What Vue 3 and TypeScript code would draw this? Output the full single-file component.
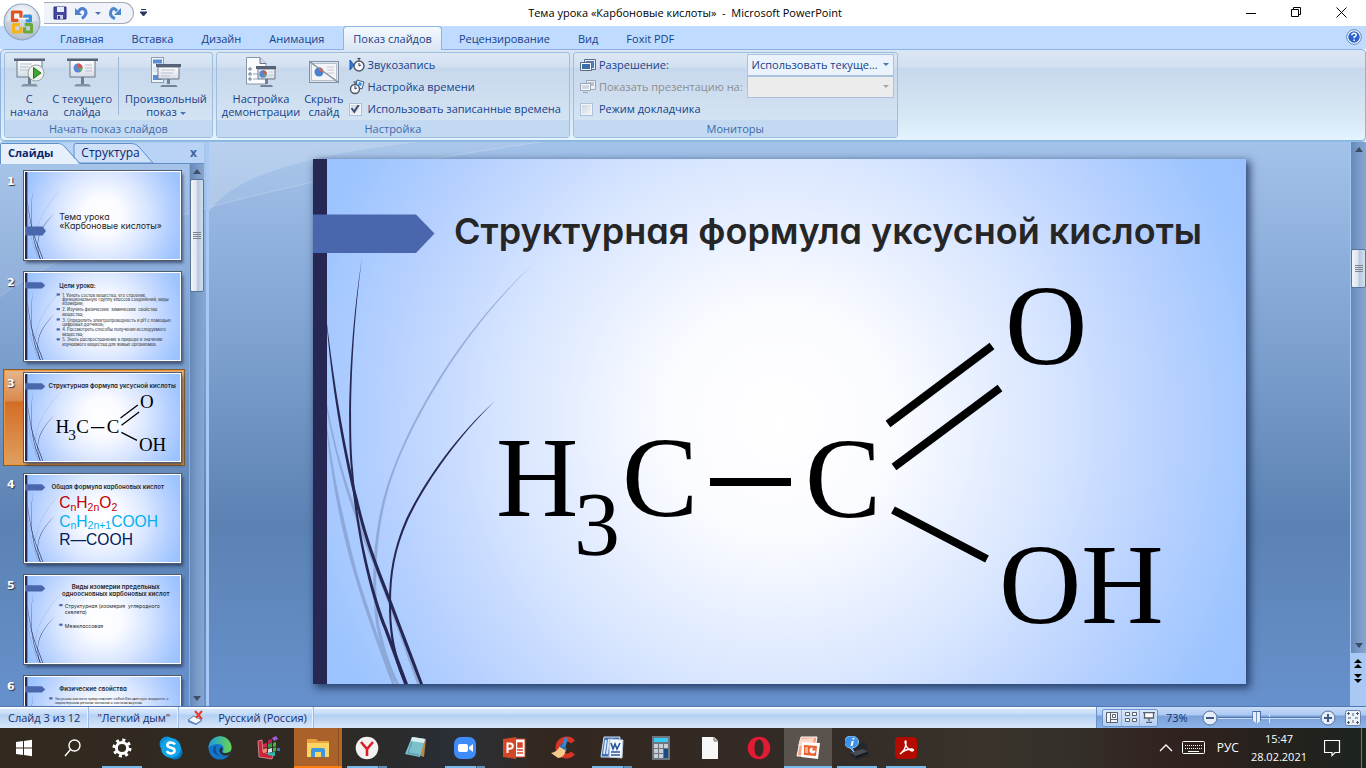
<script setup lang="ts">
import { ref } from 'vue'

interface Line {
  x: number
  y: number
  size: number
  text: string
  bold?: boolean
  middle?: boolean
  bullet?: boolean
}
interface Thumb {
  n: number
  flagY: number
  kind: 'text' | 'acid' | 'formula'
  lines: Line[]
}

const tabs = ['Главная', 'Вставка', 'Дизайн', 'Анимация', 'Показ слайдов', 'Рецензирование', 'Вид', 'Foxit PDF']
const activeTab = ref('Показ слайдов')
const current = ref(3)
const keepTimings = ref(true)
const presenter = ref(false)
const zoom = ref(37)

const thumbs: Thumb[] = [
  {
    n: 1,
    flagY: 330,
    kind: 'text',
    lines: [
      { x: 206, y: 286, size: 53, text: 'Тема урока' },
      { x: 206, y: 346, size: 53, text: '«Карбоновые кислоты»' },
    ],
  },
  {
    n: 2,
    flagY: 56,
    kind: 'text',
    lines: [
      { x: 206, y: 88, size: 36, text: 'Цели урока:', bold: true },
      { x: 224, y: 142, size: 25, text: '1. Узнать состав вещества, его строение,', bullet: true },
      { x: 224, y: 168, size: 25, text: 'функциональную группу классов соединений, виды' },
      { x: 224, y: 194, size: 25, text: 'изомерии;' },
      { x: 224, y: 230, size: 25, text: '2. Изучить физические  химические  свойства', bullet: true },
      { x: 224, y: 256, size: 25, text: 'вещества;' },
      { x: 224, y: 292, size: 25, text: '3. Определить электропроводность и pH с помощью', bullet: true },
      { x: 224, y: 318, size: 25, text: 'цифровых датчиков;' },
      { x: 224, y: 352, size: 25, text: '4. Рассмотреть способы получения исследуемого', bullet: true },
      { x: 224, y: 378, size: 25, text: 'вещества;' },
      { x: 224, y: 412, size: 25, text: '5. Знать распространение в природе и значение', bullet: true },
      { x: 224, y: 438, size: 25, text: 'изучаемого вещества для живых организмов.' },
    ],
  },
  { n: 3, flagY: 56, kind: 'acid', lines: [] },
  {
    n: 4,
    flagY: 56,
    kind: 'formula',
    lines: [{ x: 160, y: 86, size: 37, text: 'Общая формула карбоновых кислот', bold: true }],
  },
  {
    n: 5,
    flagY: 56,
    kind: 'text',
    lines: [
      { x: 546, y: 80, size: 37, text: 'Виды изомерии предельных', bold: true, middle: true },
      { x: 546, y: 122, size: 37, text: 'одноосновных карбоновых кислот', bold: true, middle: true },
      { x: 240, y: 194, size: 31, text: 'Структурная (изомерия  углеродного', bullet: true },
      { x: 240, y: 230, size: 31, text: 'скелета)' },
      { x: 240, y: 312, size: 31, text: 'Межклассовая', bullet: true },
    ],
  },
  {
    n: 6,
    flagY: 56,
    kind: 'text',
    lines: [
      { x: 206, y: 86, size: 37, text: 'Физические свойства', bold: true },
      { x: 180, y: 138, size: 22, text: 'Уксусная кислота представляет собой бесцветную жидкость с', bullet: true },
      { x: 180, y: 162, size: 22, text: 'характерным резким запахом и кислым вкусом.' },
    ],
  },
]

interface TaskItem {
  id: string
  label: string
  state?: 'run' | 'multi' | 'attention' | 'active'
}
const tasks: TaskItem[] = [
  { id: 'start', label: 'Пуск' },
  { id: 'search', label: 'Поиск' },
  { id: 'gear', label: 'Параметры', state: 'run' },
  { id: 'skype', label: 'Skype' },
  { id: 'edge', label: 'Edge' },
  { id: 'cubes', label: 'Кубики' },
  { id: 'folder', label: 'Проводник', state: 'attention' },
  { id: 'yandex', label: 'Яндекс', state: 'multi' },
  { id: 'note', label: 'Блокнот' },
  { id: 'zoom', label: 'Zoom', state: 'multi' },
  { id: 'ppt', label: 'PowerPoint' },
  { id: 'cc', label: 'CCleaner' },
  { id: 'word', label: 'Word', state: 'multi' },
  { id: 'calc', label: 'Калькулятор' },
  { id: 'file', label: 'Файл' },
  { id: 'opera', label: 'Opera' },
  { id: 'ppt7', label: 'PowerPoint 2007', state: 'active' },
  { id: 'printer', label: 'Принтер', state: 'run' },
  { id: 'pdf', label: 'Acrobat', state: 'run' },
]
</script>

<template>
  <div class="app">
    <svg class="defs" width="0" height="0" aria-hidden="true">
      <defs>
        <radialGradient id="paper" cx="466" cy="262" r="536" gradientUnits="userSpaceOnUse">
          <stop offset="0" stop-color="#ffffff" />
          <stop offset=".22" stop-color="#fafbff" />
          <stop offset=".5" stop-color="#d9e6ff" />
          <stop offset=".72" stop-color="#b9d2ff" />
          <stop offset=".92" stop-color="#9cc4ff" />
          <stop offset="1" stop-color="#9ac2ff" />
        </radialGradient>
        <linearGradient id="board" x1="0" y1="0" x2="0" y2="1">
          <stop offset="0" stop-color="#ffffff" />
          <stop offset="1" stop-color="#d5dce6" />
        </linearGradient>
        <linearGradient id="edgeg" x1="0" y1="0" x2="1" y2="0">
          <stop offset="0" stop-color="#1b9de2" />
          <stop offset="1" stop-color="#6ad64d" />
        </linearGradient>
        <symbol id="decor" viewBox="0 0 933 525">
          <rect width="933" height="525" fill="url(#paper)" />
          <g fill="#7f97c6" opacity=".65">
            <path d="M218 107 C140 180 97 265 80 310 C60 360 57 420 63 465 C69 495 76 512 83 525 L86 525 C79 511 72 492 66 465 C60 420 63 360 82 310 C99 265 142 182 218 107Z" />
            <path d="M14 253 C28 325 46 370 60 405 C74 440 92 490 104 525 L107 525 C94 486 79 443 63 403 C48 364 28 320 14 245Z" />
            <path d="M14 275 C20 330 29 375 42 418 C54 458 68 495 79 525 L82 525 C70 492 57 456 45 417 C33 372 22 325 14 268Z" />
          </g>
          <g fill="#262753">
            <path d="M49 99 C36 180 34 270 38 310 C42 370 56 432 71 470 L91 525 L95 525 L74 469 C59 431 44 370 40 310 C36 268 38 180 49 99Z" />
            <path d="M14 169 C20 240 32 300 42 342 C54 390 66 418 76 444 C86 470 98 502 107 525 L110 525 C101 500 89 470 79 443 C69 416 56 388 45 341 C34 298 23 240 14 165Z" />
            <path d="M182 242 C140 280 110 325 93 360 C80 390 76 415 76 445 C76 480 82 505 92 525 L94 525 C84 500 78 478 78 445 C78 415 82 390 95 361 C112 325 143 280 182 242Z" />
            <rect width="14" height="525" />
          </g>
        </symbol>
        <symbol id="acid" viewBox="0 0 933 525">
          <g font-family="'Liberation Serif', serif" font-size="114" fill="#000">
            <text x="183" y="357">H</text>
            <text x="261" y="396" font-size="92">3</text>
            <text x="309" y="357">C</text>
            <text x="492" y="358">C</text>
            <text x="692" y="205">O</text>
            <text x="686" y="464">OH</text>
          </g>
          <path d="M397 323H478M575 265L679 187M581 308L687 229M580 351L674 400" stroke="#000" stroke-width="8" fill="none" />
        </symbol>
        <symbol id="screen" viewBox="0 0 32 32">
          <path d="M15 20h3v7h-3z" fill="#6e7d92" />
          <path d="M10 27h13l2 2.500H8z" fill="#8593a5" />
          <rect x="4" y="3" width="25" height="17" fill="url(#board)" stroke="#6b7687" />
          <path d="M1 1.500h31v2.500H1z" fill="#566376" />
        </symbol>
      </defs>
    </svg>

    <header class="titlebar">
      <button class="orb" aria-label="Office">
        <svg viewBox="0 0 36 36" width="38" height="38">
          <defs>
            <radialGradient id="orbg" cx=".5" cy=".35" r=".65">
              <stop offset="0" stop-color="#fff" />
              <stop offset=".6" stop-color="#dce4ee" />
              <stop offset="1" stop-color="#a8b8cc" />
            </radialGradient>
          </defs>
          <circle cx="18" cy="18" r="17" fill="url(#orbg)" stroke="#8ea3bd" />
          <path d="M3 18a15 15 0 0 0 30 0q-15-5-30 0Z" fill="#b9c5d4" opacity=".6" />
          <g fill="none" stroke-width="3" stroke-linejoin="round">
            <path d="M14.500 16.500H9V8.500H17V14" stroke="#e2521b" />
            <path d="M20.500 14V12.500H26V17H21.500" stroke="#3e8fd8" />
            <path d="M16 20.500H10V27.500H17V22.500" stroke="#f6b217" />
            <path d="M20.500 20.500H27V27.500H20.500V23" stroke="#6aaa3c" />
          </g>
        </svg>
      </button>
      <div class="quick">
        <button aria-label="Сохранить">
          <svg width="14" height="14" viewBox="0 0 14 14">
            <path d="M1 1h12v12H1z" fill="#4548a4" stroke="#30317c" />
            <path d="M4 1h7v5H4z" fill="#e8edfa" /><path d="M4 9h6v4H4z" fill="#c9cfea" /><path d="M5 10h2v3H5z" fill="#30317c" />
          </svg>
        </button>
        <button aria-label="Отменить">
          <svg width="14" height="14" viewBox="0 0 14 14">
            <path d="M4 6Q8 0 11 4T8 12.500" fill="none" stroke="#4c7fd0" stroke-width="3" /><path d="M1 2v7h7z" fill="#4c7fd0" />
          </svg>
        </button>
        <i class="caret"></i>
        <button aria-label="Повторить">
          <svg width="14" height="14" viewBox="0 0 14 14">
            <path d="M9 5Q5 0 3 5T7 12.500" fill="none" stroke="#4c86cf" stroke-width="3" /><path d="M13 2v7H6z" fill="#4c86cf" />
          </svg>
        </button>
      </div>
      <svg class="more" width="7" height="8" viewBox="0 0 7 8"><path d="M1 .5h5M0 3h7L3.500 7z" fill="#25365c" stroke="#25365c" /></svg>
      <h1>Тема урока «Карбоновые кислоты»&nbsp; -&nbsp; Microsoft PowerPoint</h1>
      <div class="winbtns">
        <button aria-label="Свернуть"><svg width="11" height="11"><path d="M0 6.500h10" stroke="#000" /></svg></button>
        <button aria-label="Восстановить"><svg width="11" height="11"><path d="M.5 2.500h7v7h-7zM2.500 2.500v-2h7v7h-2" stroke="#000" fill="none" /></svg></button>
        <button aria-label="Закрыть"><svg width="11" height="11"><path d="M.5.500l10 10M10.500.500l-10 10" stroke="#000" /></svg></button>
      </div>
    </header>

    <nav class="tabs">
      <button v-for="t in tabs" :key="t" :class="{ on: t === activeTab }" @click="activeTab = t">{{ t }}</button>
      <svg class="help" width="16" height="16" viewBox="0 0 16 16">
        <circle cx="8" cy="8" r="6.500" fill="#2c62cf" stroke="#fff" stroke-width="1.500" />
        <circle cx="8" cy="8" r="7.300" fill="none" stroke="#5e86b8" />
        <path d="M5.800 6.300Q6 4.300 8.100 4.300T10.200 6.200Q10 7.200 8.200 8V9.300M8.200 10.500V12" stroke="#fff" stroke-width="1.500" fill="none" />
      </svg>
    </nav>

    <section class="ribbon">
      <div class="group">
        <div class="body starts">
          <button class="big">
            <svg width="32" height="32" viewBox="0 0 32 32">
              <use href="#screen" /><path d="M7 7h12M7 10h9M7 13h10" stroke="#b9c1cd" />
              <circle cx="23" cy="16" r="8" fill="#eef2ee" stroke="#98a5a4" /><path d="M20.500 10.500L28 16l-7.500 5.500z" fill="#3fa535" stroke="#1d7a1d" />
            </svg>
            <span>С<br />начала</span>
          </button>
          <button class="big">
            <svg width="32" height="32" viewBox="0 0 32 32">
              <use href="#screen" /><circle cx="12" cy="11" r="4.500" fill="#5b86d3" /><path d="M12 11V6.500a4.500 4.500 0 0 1 4.500 4.500z" fill="#d9534a" /><path d="M12 11h4.500a4.500 4.500 0 0 1-2 3.800z" fill="#5fae5a" /><path d="M19 8h7M19 11h7M19 14h7" stroke="#b9c1cd" />
            </svg>
            <span>С текущего<br />слайда</span>
          </button>
          <i class="rule"></i>
          <button class="big">
            <svg width="32" height="32" viewBox="0 0 32 32">
              <rect x="1.500" y=".5" width="12" height="25" fill="#eef3fa" stroke="#8b9db5" /><path d="M3 2.500h9v4H3zM3 18h9v5H3z" fill="#5b8fd4" /><path d="M3 10h9v5H3z" fill="#dde5f0" />
              <path d="M17 22h3v5h-3zM12 28h14l2 2H10z" fill="#75839a" /><path d="M8 10h21v12H8z" fill="url(#board)" stroke="#6b7687" /><path d="M6 7h25v3H6z" fill="#566376" /><path d="M11 13h14M11 16h12M11 19h9" stroke="#b9c1cd" />
            </svg>
            <span>Произвольный<br />показ <i class="caret"></i></span>
          </button>
        </div>
        <footer>Начать показ слайдов</footer>
      </div>

      <div class="group">
        <div class="body setup">
          <button class="big">
            <svg width="32" height="32" viewBox="0 0 32 32">
              <path d="M1.500 .5H15l6 6V27H1.500z" fill="#fbfcfe" stroke="#8795a8" /><path d="M15 .5v6h6" fill="#d5dce6" stroke="#657285" />
              <g fill="none" stroke="#63718a"><circle cx="5" cy="12" r="1.200" /><circle cx="5" cy="17" r="1.200" /><circle cx="5" cy="22" r="1.200" /></g><path d="M8 17h5M8 22h5" stroke="#9aa6b6" />
              <path d="M20 22h3v5h-3zM16 28h11l1 2H15z" fill="#75839a" /><path d="M13 12h17v10H13z" fill="url(#board)" stroke="#6b7687" /><path d="M11 9h20v3H11z" fill="#566376" /><circle cx="18" cy="17" r="3.800" fill="#5b86d3" /><path d="M18 17v-3.800a3.800 3.800 0 0 1 3.800 3.800z" fill="#d9534a" /><path d="M18 17h3.800a3.800 3.800 0 0 1-2 3z" fill="#5fae5a" /><path d="M23.500 15h5M23.500 18h5" stroke="#b9c1cd" />
            </svg>
            <span>Настройка<br />демонстрации</span>
          </button>
          <button class="big">
            <svg width="32" height="32" viewBox="0 0 32 32">
              <rect x="1.500" y="4.500" width="29" height="21" fill="#dfe3ea" stroke="#8290a3" /><rect x="3.500" y="6.500" width="25" height="17" fill="#f3f5f8" stroke="#b6bfcb" />
              <circle cx="11" cy="15" r="4.500" fill="#4a7fd0" /><path d="M11 15v-4.500a4.500 4.500 0 0 1 4.500 4.500z" fill="#d9534a" /><path d="M19 10h7M19 13h7M19 16h7" stroke="#c2c9d3" /><path d="M2 5l28 20" stroke="#8290a3" stroke-width="1.500" />
            </svg>
            <span>Скрыть<br />слайд</span>
          </button>
          <div class="stack">
            <button class="small">
              <svg width="16" height="16" viewBox="0 0 16 16"><path d="M1 3l4 5-4 5z" fill="#2f7ae0" stroke="#1c55a8" /><circle cx="10" cy="9" r="5" fill="#f6f8fb" stroke="#4d5665" stroke-width="1.400" /><path d="M10 6v3l2-1M8.500 1.500h3M10 2v2" stroke="#333c4b" fill="none" /></svg>
              Звукозапись
            </button>
            <button class="small">
              <svg width="16" height="16" viewBox="0 0 16 16"><path d="M8 1l7 2-2 7-6-2z" fill="#eaf3fc" stroke="#3d5e8a" /><path d="M10 3l3 1-1 3-3-1z" fill="#2f93e8" /><circle cx="6" cy="10" r="4.500" fill="#f6f8fb" stroke="#4d5665" stroke-width="1.400" /><path d="M6 7v3l2-1M4.500 3h3M6 3.500v2" stroke="#333c4b" fill="none" /></svg>
              Настройка времени
            </button>
            <label class="small"><input v-model="keepTimings" type="checkbox" />Использовать записанные времена</label>
          </div>
        </div>
        <footer>Настройка</footer>
      </div>

      <div class="group">
        <div class="body monitors">
          <label class="small" for="res">
            <svg width="16" height="16" viewBox="0 0 16 16"><path d="M4.500 2.500h11v10h-11z" fill="#e9eef5" stroke="#5d6c82" /><path d="M6 4h8v7H6z" fill="#4e7fb8" /><path d="M.5 5.500h11v8H.5z" fill="#f4f7fb" stroke="#5d6c82" /><path d="M2 7h8v5H2z" fill="#3c6ea9" /></svg>
            Разрешение:
          </label>
          <div class="combo"><select id="res"><option>Использовать текуще...</option></select><i class="caret"></i></div>
          <label class="small dim" for="mon">
            <svg width="16" height="16" viewBox="0 0 16 16"><path d="M6.500 1.500h9v9h-9z" fill="#edf1f6" stroke="#9aa5b3" /><path d="M8 3h6v4H8z" fill="#b8c3d0" /><path d="M.5 4.500h10v7H.5zM3 13.500h5" fill="#f6f8fb" stroke="#9aa5b3" /><path d="M2 7h7M2 9h7" stroke="#aab5c3" /></svg>
            Показать презентацию на:
          </label>
          <div class="combo off"><select id="mon" disabled><option></option></select><i class="caret"></i></div>
          <label class="small"><input v-model="presenter" type="checkbox" />Режим докладчика</label>
        </div>
        <footer>Мониторы</footer>
      </div>
    </section>

    <main class="work">
      <svg class="swirl" viewBox="0 0 1366 565" preserveAspectRatio="none" aria-hidden="true">
        <path d="M0 155Q120 60 560 -3H0Z" fill="#fff" opacity=".08" />
        <path d="M209 70Q240 20 420 0H209Z" fill="#fff" opacity=".18" />
        <path d="M0 155Q120 60 560 -3" fill="none" stroke="#fff" opacity=".2" />
      </svg>

      <aside class="pane">
        <div class="panetabs">
          <svg class="paneshape" width="204" height="22" viewBox="0 0 204 22" aria-hidden="true">
            <path d="M0 .5H204V21.500H0Z" fill="#b8d3f5" />
            <path d="M74 21V3.500Q74 1.500 76 1.500H132Q136 1.500 139 5L153 21Z" fill="#cfe1f9" stroke="#5f8ec8" />
            <path d="M.5 22V3Q.5 1.500 3 1.500H58Q62 1.500 65 5L80 21.500H204" fill="none" stroke="#5f8ec8" />
            <path d="M1 22V3Q1 2 3 2H58Q62 2 65 6L79 22Z" fill="#e6f0fd" />
          </svg>
          <button class="on">Слайды</button>
          <button>Структура</button>
          <button class="close" aria-label="Закрыть">x</button>
        </div>
        <div class="panebody">
          <div class="list">
            <button v-for="s in thumbs" :key="s.n" class="thumb" :class="{ sel: s.n === current }" @click="current = s.n">
              <b>{{ s.n }}</b>
              <svg viewBox="0 0 933 525">
                <use href="#decor" />
                <path :d="`M0 ${s.flagY}h${s.flagY > 100 ? 106 : 102}l20 19-20 19H0z`" fill="#4a66ac" :transform="s.flagY > 100 ? 'translate(0 -140) scale(1 1.42)' : ''" />
                <text v-if="s.kind === 'acid'" class="gothic strong" x="141" y="86" font-size="37">Структурная формула уксусной кислоты</text>
                <use v-if="s.kind === 'acid'" href="#acid" />
                <g v-for="(l, i) in s.lines" :key="i">
                  <rect v-if="l.bullet" :x="l.x - 34" :y="l.y - l.size + 6" width="20" height="13" fill="#4a66ac" />
                  <text class="gothic" :class="{ strong: l.bold }" :x="l.x" :y="l.y" :font-size="l.size" :text-anchor="l.middle ? 'middle' : 'start'">{{ l.text }}</text>
                </g>
                <g v-if="s.kind === 'formula'" class="formula">
                  <text x="206" y="198" fill="#c00000">C<tspan class="sub" dy="16">n</tspan><tspan dy="-16">H</tspan><tspan class="sub" dy="16">2n</tspan><tspan dy="-16">O</tspan><tspan class="sub" dy="16">2</tspan></text>
                  <text x="206" y="311" fill="#00b0f0">C<tspan class="sub" dy="16">n</tspan><tspan dy="-16">H</tspan><tspan class="sub" dy="16">2n+1</tspan><tspan dy="-16">COOH</tspan></text>
                  <text x="206" y="424" fill="#002060">R—COOH</text>
                </g>
              </svg>
            </button>
          </div>
          <div class="scroll left"><i class="up"></i><i class="grip"></i><i class="space"></i><i class="down"></i></div>
        </div>
      </aside>

      <section class="stage">
        <svg class="slide" viewBox="0 0 933 525">
          <use href="#decor" />
          <path d="M0 55.500h103l18.500 19L103 94H0z" fill="#4a66ac" />
          <text class="gothic strong" x="141" y="85" font-size="36">Структурная формула уксусной кислоты</text>
          <use href="#acid" />
        </svg>
      </section>

      <div class="rightbar">
        <div class="scroll right"><i class="up"></i><i class="before"></i><i class="grip"></i><i class="space"></i><i class="down"></i></div>
        <button aria-label="Предыдущий слайд"><svg width="8" height="10"><path d="M4 0L8 4H0zM4 5l4 4H0z" /></svg></button>
        <button aria-label="Следующий слайд"><svg width="8" height="10"><path d="M4 4L8 0H0zM4 9l4-4H0z" /></svg></button>
      </div>
    </main>

    <footer class="status">
      <span class="cell">Слайд 3 из 12</span>
      <span class="cell">"Легкий дым"</span>
      <span class="cell lang">
        <svg width="17" height="16" viewBox="0 0 17 16"><path d="M1 10l6-4 8 4-6 4z" fill="#f5f8fc" stroke="#5878a8" /><path d="M1 10v2l8 3 6-4v-1l-6 4z" fill="#5b84c0" /><path d="M8 1l7 8M15 1L9 8" stroke="#e8392c" stroke-width="2" /></svg>
        Русский (Россия)
      </span>
      <span class="fill"></span>
      <div class="tools">
        <div class="views">
          <button aria-label="Обычный"><svg width="12" height="11"><path d="M.5.500h11v10H.5zM4.500.500v10M4.500 7.500h7" fill="#f4f6fa" stroke="#59606e" /><path d="M6.500 2.500h3v3h-3z" fill="#fff" stroke="#59606e" /></svg></button>
          <button aria-label="Сортировщик"><svg width="12" height="11"><path d="M.5.500h4v3h-4zM7.500.500h4v3h-4zM.5 6.500h4v3h-4zM7.500 6.500h4v3h-4z" fill="#fff" stroke="#59606e" /></svg></button>
          <button aria-label="Показ слайдов"><svg width="12" height="11"><path d="M0 .5h12M1.500 1v5h9V1M6 6v3M3 10.500h6" fill="#fff" stroke="#59606e" stroke-width="1.300" /></svg></button>
        </div>
        <span class="pct">73%</span>
        <button class="round" aria-label="Уменьшить"><svg width="16" height="16"><circle cx="8" cy="8" r="7" fill="#e3ecf8" stroke="#546f9a" /><path d="M4 8h8" stroke="#3f5a86" stroke-width="2" /></svg></button>
        <div class="range"><i></i><input v-model="zoom" type="range" min="0" max="100" aria-label="Масштаб" /></div>
        <button class="round" aria-label="Увеличить"><svg width="16" height="16"><circle cx="8" cy="8" r="7" fill="#e3ecf8" stroke="#546f9a" /><path d="M4 8h8M8 4v8" stroke="#3f5a86" stroke-width="2" /></svg></button>
        <button class="fit" aria-label="Вписать"><svg width="16" height="16"><rect x=".5" y=".5" width="15" height="15" rx="2" fill="#eef3fa" stroke="#6883ae" /><path d="M3.500 2v3M2 3.500h3M12.500 2v3M11 3.500h3M3.500 11v3M2 12.500h3M12.500 11v3M11 12.500h3M8 3v3M8 10v3M3 8h3M10 8h3" stroke="#495a78" /></svg></button>
      </div>
    </footer>

    <footer class="taskbar">
      <button v-for="t in tasks" :key="t.id" class="task" :class="t.state" :aria-label="t.label">
        <svg width="24" height="24" viewBox="0 0 24 24">
          <path v-if="t.id === 'start'" d="M4 6l7-1v6.500H4zM12 4.900l8-1.200v7.800h-8zM4 12.500h7V19l-7-1zM12 12.500h8v7.800l-8-1.200z" fill="#fff" />
          <g v-else-if="t.id === 'search'" fill="none" stroke="#fff" stroke-width="1.400"><circle cx="13.500" cy="9.500" r="5.500" /><path d="M9.500 13.500L4 20" /></g>
          <g v-else-if="t.id === 'gear'" fill="none" stroke="#fff"><circle cx="12" cy="12" r="5.600" stroke-width="3" /><circle cx="12" cy="12" r="8" stroke-width="3" stroke-dasharray="3 3.283" /></g>
          <g v-else-if="t.id === 'skype'"><circle cx="8" cy="8" r="7.500" fill="#0d90d8" /><circle cx="16" cy="16" r="7.500" fill="#0078c8" /><circle cx="12" cy="12" r="10" fill="#12a4e8" /><path d="M16 8.500Q14.500 6.300 11.500 6.500T8.300 9Q8.300 11 12 11.700T15.600 14.700Q15.400 17.300 12.200 17.400T7.800 15.200" stroke="#fff" stroke-width="2.500" fill="none" /></g>
          <g v-else-if="t.id === 'edge'"><circle cx="12" cy="12" r="11.500" fill="#1475c8" /><path d="M.7 12A11.400 11.400 0 0 1 23.500 11.500Q23.500 17 17 17Q14 16.500 15.500 14Q16.500 9 11 8Q4 7.500 .7 12Z" fill="url(#edgeg)" /><path d="M9 9Q6 13 9 17.500T20.500 19Q15 22 9 19T6 11Z" fill="#0c4f9c" /><path d="M13.500 16Q17 19 23 15L21 19Q14 21 11.500 15.500Q11 12 14 11Q15 13.500 13.500 16Z" fill="#2f2a22" /></g>
          <g v-else-if="t.id === 'cubes'"><path d="M1 5l4-1 1 12 10 3-1 4-13-2z" fill="#c9243a" stroke="#f4a9ae" stroke-width=".7" /><path d="M6 8l4-1v4l-4 1z" fill="#d9264a" /><path d="M11 4l4-1v4l-4 1z" fill="#b91f57" /><path d="M11 8l4-1v4l-4 1z" fill="#2f9e48" /><path d="M16 7l3-1v4l-3 1z" fill="#3bbb42" /><path d="M6 13l4-1v4l-4 1z" fill="#f08a6a" /><path d="M11 13l4-1v4l-4 1z" fill="#d9ddeb" /><path d="M16 12l3-1v4l-3 1z" fill="#3bbb42" /><path d="M11 17l7-1v4l-7-1z" fill="#2fb8b6" /><path d="M15 2l4-2 2 3-4 2z" fill="#a55bd6" /><path d="M20 12h3v3h-3z" fill="#2d7be0" /></g>
          <g v-else-if="t.id === 'folder'"><path d="M1 3h9l2 2h11v15H1z" fill="#e9a33a" /><path d="M1 7h22v14H1z" fill="#fbd667" /><path d="M5 21v-7Q5 12 7 12h10q2 0 2 2v7h-4v-5H9v5z" fill="#3d96e0" /></g>
          <g v-else-if="t.id === 'yandex'"><circle cx="12" cy="12" r="11.300" fill="#f1f1f1" /><path d="M6 6l6 7 6-7M12 12v8" stroke="#dc1f26" stroke-width="2.600" fill="none" /></g>
          <g v-else-if="t.id === 'note'"><path d="M8 1l14 2-2 18-3-1z" fill="#b5894a" /><path d="M8 1l13 2-5 18-15-3z" fill="#7ebfcc" /><path d="M8 1l13 2-1 4-13-2z" fill="#d6eef0" /><path d="M8 6l-4 11 11 2" fill="none" stroke="#4e97a8" /></g>
          <g v-else-if="t.id === 'zoom'"><rect x="1" y="1" width="22" height="22" rx="7" fill="#3f8cf9" /><rect x="5" y="8" width="10" height="8" rx="2" fill="#fff" /><path d="M16 11l4-3v8l-4-3z" fill="#fff" /></g>
          <g v-else-if="t.id === 'ppt'"><path d="M13 3h10v18H13z" fill="#fff" stroke="#d24726" /><path d="M16 7h4v4h-4zM15 14h6M15 17h6" fill="#d24726" stroke="#d24726" stroke-width="1.500" /><path d="M1 3l13-2v22L1 21z" fill="#d24726" /><path d="M5.500 17V7.500H8Q10.800 7.500 10.800 10T8 12.700H5.500" stroke="#fff" stroke-width="2" fill="none" /></g>
          <g v-else-if="t.id === 'cc'"><path d="M22 6A8.500 8.500 0 1 0 22 17" stroke="#d73527" stroke-width="5" fill="none" /><path d="M14 1l3 1-3 11-4-2z" fill="#3986cb" /><path d="M9 10l6 4q-2 8-8 8L0 17q6-1 9-7z" fill="#f6ca8b" /><path d="M8.500 9.500l7 4" stroke="#3472af" stroke-width="2.500" /></g>
          <g v-else-if="t.id === 'word'"><path d="M4 1h16l-3 20H1z" fill="#3b6fb9" stroke="#dbe7f8" /><path d="M6 4L4 18M9 3L7 18" stroke="#dbe7f8" stroke-width="2" /><path d="M10 3l13 1-1 18-13-1z" fill="#f6f9fd" stroke="#bac8dc" /><path d="M11 7l2 6 2-5 2 5 3-6M11 16h9M11 19h9" stroke="#2a5699" stroke-width="1.600" fill="none" /></g>
          <g v-else-if="t.id === 'calc'"><path d="M3 0h18v24H3z" fill="#6d7680" /><path d="M5 2h14v4H5z" fill="#39c9f2" /><path d="M5 8h4v4H5zM10 8h4v4h-4zM15 8h4v4h-4zM5 13h4v4H5zM10 13h4v4h-4zM5 18h4v4H5zM10 18h4v4h-4z" fill="#c9ced4" /><path d="M15 13h4v9h-4z" fill="#174b85" /></g>
          <g v-else-if="t.id === 'file'"><path d="M4 1h12l4 4v18H4z" fill="#f7f7f7" /><path d="M16 1v4h4" fill="#ccc" stroke="#777" /></g>
          <path v-else-if="t.id === 'opera'" d="M12 .7a11.300 11.300 0 1 0 0 22.600 11.300 11.300 0 1 0 0-22.600zM12 3.500c3 0 4.500 4 4.500 8.500S15 20.500 12 20.500 7.500 16.500 7.500 12 9 3.500 12 3.500z" fill="#e21b34" fill-rule="evenodd" />
          <g v-else-if="t.id === 'ppt7'"><path d="M5 1h16l-3 19H1z" fill="#f3a184" stroke="#fff" /><path d="M4 3l14-1-2 8H2z" fill="#fad7c9" /><path d="M6 6l18 1-2 16-17-2z" fill="#fff" /><path d="M8 9l13 1-1 10-12-1z" fill="#e8602c" /><circle cx="16.500" cy="14.500" r="3" fill="#fff" /><path d="M16.500 14.500v-4l4 4z" fill="#e8602c" /><path d="M9 12h3M9 14h3M9 16h3" stroke="#fff" /></g>
          <g v-else-if="t.id === 'printer'"><path d="M11 11l7-5 4 2v7l2 1v4l-13 4-6-4v-4z" fill="#24282d" /><path d="M5 16l13-3 5 3-12 4z" fill="#474c53" /><path d="M11 20l11-4v2l-11 4z" fill="#15181b" /><path d="M7 0a6.500 6 0 1 1 0 12l2 4-4-4A6.500 6 0 0 1 7 0z" fill="#3b92e8" stroke="#8ac1f3" /><path d="M8.500 2v1.500M7.800 5L6.500 10" stroke="#fff" stroke-width="2" /></g>
          <g v-else><rect x="1" y="1" width="22" height="22" rx="4" fill="#b30b00" /><path d="M6 18Q12 14 12 6q0-2-1 0 1 7 7 9 3-1 0-2-7 0-12 5z" fill="none" stroke="#fff" stroke-width="1.500" /></g>
        </svg>
      </button>
      <div class="tray">
        <svg width="14" height="8"><path d="M1 7l6-6 6 6" stroke="#fff" fill="none" stroke-width="1.300" /></svg>
        <svg width="24" height="14"><rect x=".5" y=".5" width="22" height="12" rx="1" fill="none" stroke="#fff" /><path d="M3 4.500h17M3 7.500h17" stroke="#fff" stroke-dasharray="1 1" /><path d="M6 10.500h11" stroke="#fff" /></svg>
        <span class="lng">РУС</span>
        <time>15:47<br />28.02.2021</time>
        <svg width="17" height="17"><path d="M.5.500h15v12H11L8 15.500 8 12.500H.5z" fill="none" stroke="#fff" stroke-width="1.200" /></svg>
      </div>
    </footer>
  </div>
</template>

<style>
html,
body {
  margin: 0;
  overflow: hidden;
}
</style>

<style scoped>
* {
  box-sizing: border-box;
}
.app {
  display: flex;
  flex-direction: column;
  height: 100vh;
  font: 11px/14px 'Open Sans', 'Noto Sans', sans-serif;
  color: #15428b;
  overflow: hidden;
}
.defs {
  position: absolute;
}
button,
select {
  font: inherit;
  color: inherit;
  background: none;
  border: 0;
  padding: 0;
}
button svg {
  display: block;
}
.caret {
  display: inline-block;
  border: 3px solid transparent;
  border-top-color: #4a77b4;
  border-bottom: 0;
  vertical-align: middle;
}

.titlebar {
  flex: 0 0 26px;
  display: flex;
  align-items: center;
  background: #fff;
  position: relative;
  z-index: 2;
}
.orb {
  position: absolute;
  left: 3px;
  top: 3px;
}
.quick {
  display: flex;
  align-items: center;
  gap: 7px;
  margin-left: 44px;
  align-self: flex-start;
  margin-top: 2px;
  height: 22px;
  width: 90px;
  padding-left: 9px;
  border: 1px solid #a5abb5;
  border-left: 0;
  border-radius: 0 11px 11px 0;
  background: #f0f3f9;
}
.more {
  margin-left: 6px;
}
h1 {
  flex: 1;
  margin: 0;
  font-size: 11px;
  font-weight: 400;
  text-align: center;
  color: #000;
  padding-right: 6px;
}
.winbtns {
  display: flex;
  align-self: flex-start;
  padding-right: 2px;
}
.winbtns button {
  width: 45px;
  height: 24px;
  display: grid;
  place-items: center;
}

.tabs {
  flex: 0 0 23px;
  display: flex;
  align-items: stretch;
  background: #bfdbff;
  padding: 0 4px 0 46px;
}
.tabs button {
  padding: 2px 14px 0;
  position: relative;
}
.tabs .on {
  z-index: 1;
  margin: 0 3px -1px 5px;
  padding: 1px 9px 0;
  border: 1px solid #8db2e3;
  border-bottom: 0;
  border-radius: 4px 4px 0 0;
  background: linear-gradient(#f4f9ff, #dbe6f4);
}
.help {
  margin: 3px 0 0 auto;
}

.ribbon {
  flex: 0 0 91px;
  display: flex;
  gap: 3px;
  margin: 0;
  padding: 2px 3px;
  border: 1px solid #8db2e3;
  border-radius: 4px;
  background: linear-gradient(#dbe6f4 0, #d2e0f0 17px, #c7d8ed 18px, #d8e8f5 70px, #e3f4ff);
  box-shadow: 0 1px 0 #8bbfe0;
}
.group {
  display: flex;
  flex-direction: column;
  border: 1px solid #9ebfdb;
  border-radius: 3px;
  background: linear-gradient(#dde8f5 0, #d1dfef 14px, #c7d8ed 15px, #d8e7f4);
}
.group > footer {
  height: 17px;
  line-height: 17px;
  text-align: center;
  background: #c2d9f1;
  color: #3e6aaa;
}
.body {
  flex: 1;
  display: flex;
  align-items: flex-start;
}
.starts {
  padding: 4px 3px 0;
}
.setup {
  padding: 4px 8px 0 3px;
}
.big {
  display: flex;
  flex-direction: column;
  align-items: center;
  line-height: 13px;
  padding: 0 2px;
}
.big span {
  margin-top: 3px;
  white-space: nowrap;
}
.rule {
  width: 1px;
  height: 58px;
  margin: 0 4px;
  background: #9cb9dc;
}
.stack {
  margin: -3px 0 0 3px;
}
.small {
  display: flex;
  align-items: center;
  gap: 3px;
  height: 22px;
  white-space: nowrap;
}
input[type='checkbox'] {
  appearance: none;
  width: 13px;
  height: 13px;
  margin: 0 3px 0 0;
  border: 1px solid #abc1de;
  background: linear-gradient(135deg, #cdd3da, #f8f8f8);
  box-shadow: inset 0 0 0 1px #f2f5f9;
}
input[type='checkbox']:checked::before {
  content: '';
  display: block;
  width: 9px;
  height: 9px;
  margin: 1px;
  background: #3b4d73;
  clip-path: polygon(0 45%, 20% 35%, 38% 60%, 80% 0, 100% 8%, 42% 100%);
}
.monitors {
  display: grid;
  grid-template-columns: auto 147px;
  align-content: start;
  column-gap: 4px;
  padding: 1px 3px 0 6px;
}
.dim {
  color: #8d8d8d;
}
.combo {
  position: relative;
  height: 22px;
}
.combo select {
  appearance: none;
  width: 100%;
  height: 22px;
  padding: 0 4px;
  border: 1px solid #abc1de;
  background: #eaf2fb;
  white-space: nowrap;
}
.combo.off select {
  background: #ececec;
  opacity: 1;
}
.combo .caret {
  position: absolute;
  right: 5px;
  top: 9px;
}
.combo.off .caret {
  border-top-color: #a5a5a5;
}

.work {
  flex: 1;
  min-height: 0;
  display: flex;
  position: relative;
  margin-top: 1px;
  background: linear-gradient(#a3c2ea 0, #86a8d6 28%, #5b82b3 68%, #6791cd 100%);
}
.swirl {
  position: absolute;
  inset: 0;
  width: 100%;
  height: 100%;
}
.pane {
  width: 209px;
  display: flex;
  flex-direction: column;
  position: relative;
  border-right: 3px solid #a9c9f5;
  padding-right: 2px;
}
.panetabs {
  flex: 0 0 22px;
  display: flex;
  position: relative;
  font-size: 12px;
}
.paneshape {
  position: absolute;
  left: 0;
  top: 0;
}
.panetabs button {
  position: relative;
  padding: 0 8px;
  color: #0a246a;
}
.panetabs .on {
  font-size: 11px;
  font-weight: 700;
  margin-right: 12px;
}
.panetabs .close {
  margin-left: auto;
  padding-right: 7px;
  color: #40659a;
  font-weight: 700;
}
.panebody {
  flex: 1;
  min-height: 0;
  display: flex;
}
.list {
  flex: 1;
  min-width: 0;
  overflow: hidden;
  padding: 3px 3px 0 3px;
}
.thumb {
  display: flex;
  align-items: flex-start;
  width: 182px;
  height: 97px;
  margin-bottom: 4px;
  padding: 4px 0 0 4px;
  text-align: left;
}
.thumb b {
  width: 17px;
  color: #fff;
  margin-top: 4px;
  font: 700 11px/14px 'DejaVu Sans', sans-serif;
  text-shadow: 1px 1px 1px #334;
}
.thumb svg {
  width: 157px;
  border: 1px solid #fff;
  outline: 1px solid #4f5b6e;
  box-shadow: 2px 3px 3px rgba(20, 30, 60, 0.6);
}
.sel {
  border: 1px solid #7d6131;
  background: linear-gradient(#e5b68c 0, #d98a50 32%, #d36d26 34%, #e0a060 100%);
  padding: 3px 0 0 3px;
  box-shadow: inset 0 0 0 1px #f29536;
}
.gothic {
  font-family: Inter, 'Open Sans', sans-serif;
  font-feature-settings: 'cv11';
  fill: #262626;
  white-space: pre;
}
.strong {
  font-weight: 600;
}
.formula {
  font-family: 'Liberation Sans', sans-serif;
  font-size: 94px;
}
.sub {
  font-size: 63px;
}

.scroll {
  display: flex;
  flex-direction: column;
  align-items: center;
  background: linear-gradient(90deg, #6488b9, #7a9bc8 50%, #86a5cf);
}
.scroll .up,
.scroll .down {
  border: 4px solid transparent;
}
.scroll .up {
  border-bottom: 5px solid #3f4c66;
  border-top: 0;
  margin: 5px 0;
}
.scroll .down {
  border-top: 5px solid #3f4c66;
  border-bottom: 0;
  margin: 5px 0;
}
.scroll .grip {
  width: 100%;
  border: 1px solid #5a7399;
  border-radius: 2px;
  background:
    repeating-linear-gradient(#7b838f 0 1px, transparent 1px 2px) center / 8px 7px no-repeat,
    linear-gradient(90deg, #f2f5f9, #dce4ee 45%, #b5c8e0 55%, #d3dfed);
}
.scroll .space {
  flex: 1;
}
.left {
  width: 15px;
  border-left: 1px solid #8db0dd;
}
.left .grip {
  height: 113px;
}

.stage {
  flex: 1;
  min-width: 0;
  display: flex;
  align-items: center;
  justify-content: center;
  padding: 17px 0 22px;
  position: relative;
}
.slide {
  height: 100%;
  max-width: 100%;
  aspect-ratio: 933 / 525;
  box-shadow: 3px 3px 8px 1px rgba(25, 45, 85, 0.8);
}
.rightbar {
  width: 16px;
  display: flex;
  flex-direction: column;
  position: relative;
  padding-bottom: 20px;
  background: #a9c9f5;
}
.right {
  flex: 1;
  margin-bottom: 3px;
  border-left: 1px solid #a9c9f5;
}
.right .before {
  flex: 0 0 18%;
}
.right .grip {
  height: 39px;
}
.rightbar button {
  height: 15px;
  display: grid;
  place-items: center;
}

.status {
  flex: 0 0 22px;
  display: flex;
  color: #15306e;
  border-top: 1px solid #4f78b4;
  background: linear-gradient(#fff 0 1px, #d9e8fb 2px, #c4dbf8 7px, #b4d0f4 8px, #d7e6f9 100%);
}
.cell {
  display: flex;
  align-items: center;
  padding: 0 8px;
  border-right: 1px solid #9cbbe4;
  box-shadow: inset -1px 0 0 #e8f2fe;
}
.lang {
  gap: 14px;
  padding-right: 6px;
}
.fill {
  flex: 1;
}
.tools {
  display: flex;
  align-items: center;
  padding: 0 5px;
  border-left: 1px solid #6a92cb;
  background: linear-gradient(#c9ddf8 0, #a9c8f3 8px, #7ba2d8 9px, #8db4ea);
}
.views {
  display: flex;
  height: 18px;
  border: 1px solid #6c93c9;
  border-radius: 2px;
  background: linear-gradient(#d9e8fb, #b3cff3);
}
.views button {
  width: 18px;
  display: grid;
  place-items: center;
}
.views button + button {
  border-left: 1px solid #8fb2df;
}
.pct {
  width: 36px;
  padding-left: 8px;
  margin-right: 8px;
  white-space: nowrap;
}
.round {
  width: 16px;
}
.range {
  width: 102px;
  height: 16px;
  position: relative;
  display: flex;
}
.range i {
  position: absolute;
  left: 51px;
  top: 4px;
  width: 1px;
  height: 9px;
  background: #dfeafa;
}
input[type='range'] {
  appearance: none;
  width: 100%;
  height: 16px;
  margin: 0;
  position: relative;
  background: linear-gradient(#4f76ae 0 1px, #c9ddf7 1px 2px) center / 100% 2px no-repeat;
}
input[type='range']::-webkit-slider-thumb {
  appearance: none;
  width: 9px;
  height: 13px;
  background: linear-gradient(90deg, #4b6da3 0 1px, #e6eefa 1px 4px, #7d95ba 4px 5px, #e6eefa 5px 8px, #4b6da3 8px);
  border-top: 1px solid #4b6da3;
  clip-path: polygon(0 0, 100% 0, 100% 68%, 50% 100%, 0 68%);
}
.fit {
  margin-left: 9px;
}

.taskbar {
  flex: 0 0 40px;
  display: flex;
  gap: 1px;
  background: linear-gradient(90deg, #33291e 0, #2f2a23 24%, #292c31 31%, #2b3038 34%, #33281f 40%, #332b27 60%, #39332a 72%, #34302a 78%, #32231f 85%, #27211d 92%, #1d241e);
}
.task {
  width: 48px;
  display: grid;
  place-items: center;
  position: relative;
}
.run::after,
.multi::after,
.active::after,
.attention::after {
  content: '';
  position: absolute;
  left: 4px;
  right: 4px;
  bottom: 0;
  height: 2px;
  background: #76b9ed;
}
.multi::after {
  background: linear-gradient(90deg, #76b9ed 0 31px, #47607a 31px 32px, #5b90bb 32px);
}
.active {
  background: #5a524d;
}
.active::after {
  left: 0;
  right: 0;
}
.attention {
  background: linear-gradient(90deg, #ab622a 0 44px, #8c4d20 44px 45px, #b0652b 45px);
}
.attention::after {
  left: 0;
  right: 0;
  background: #ff7d0c;
}
.tray {
  margin-left: auto;
  display: flex;
  align-items: center;
  color: #fff;
  padding-right: 20px;
  margin-right: 4px;
  border-right: 1px solid #77756f;
}
.tray svg + svg {
  margin-left: 9px;
}
.lng {
  margin: 0 12px 0 11px;
  font-size: 12px;
}
time {
  line-height: 18px;
  text-align: center;
  margin-right: 17px;
}
</style>
